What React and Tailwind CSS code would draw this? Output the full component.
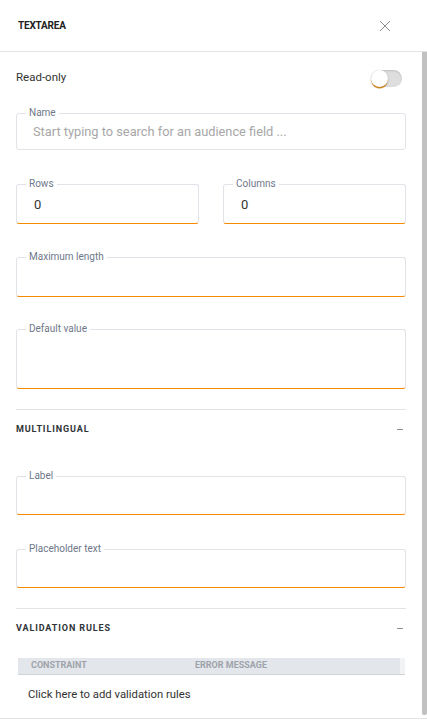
const font = { fontFamily: "Roboto, 'Liberation Sans', sans-serif" };

function Field({ label, height, orange = true, placeholder, value, className = "" }) {
  return (
    <fieldset
      className={`border border-[#e1e3e8] rounded-[3px] px-0 pb-0 m-0 min-w-0 ${
        orange ? "border-b-[#f68b00]" : ""
      } ${className}`}
    >
      <legend className="ml-[9px] px-[3px] text-[10px] leading-[12px] text-[#6e7889]">
        {label}
      </legend>
      <div className={`flex items-center px-4 ${height}`}>
        {placeholder && (
          <span className="text-[12.8px] text-[#a7a7a7] -mt-[4px]">{placeholder}</span>
        )}
        {value && <span className="text-[13px] text-[#333] pl-[1px] -mt-[4px]">{value}</span>}
      </div>
    </fieldset>
  );
}

function SectionHeader({ title }) {
  return (
    <div className="flex items-center justify-between h-[39px]">
      <span className="text-[9px] font-bold tracking-[0.1em] text-[#2f3338]">{title}</span>
      <span className="w-[6px] h-px bg-[#8a8f99] mr-[3px]"></span>
    </div>
  );
}

export default function App() {
  return (
    <div className="w-[427px] h-[720px] bg-white overflow-hidden flex flex-col" style={font}>
      <div className="h-[52px] shrink-0 border-b border-[#e3e3e3] flex items-center justify-between pl-[18px] pr-[36px]">
        <span className="text-[10px] font-bold text-[#222] tracking-[-0.02em]">TEXTAREA</span>
        <svg width="12" height="12" viewBox="0 0 12 12" className="mt-[1px]">
          <path d="M1 1 L11 11 M11 1 L1 11" stroke="#8c8c8c" strokeWidth="1" fill="none" />
        </svg>
      </div>

      <div className="h-[667px] shrink-0 flex border-b border-[#e3e3e3]">
        <div className="flex-1 overflow-hidden pl-4 pr-[15px]">
          <div className="h-[52px] flex items-center justify-between">
            <span className="text-[11.5px] text-[#333]">Read-only</span>
            <div className="relative w-[31px] h-[17px] rounded-full bg-[#dedede] shadow-[inset_0_1px_2px_rgba(0,0,0,0.15)] mr-[4px]">
              <div className="absolute left-0 top-0 w-[17px] h-[17px] rounded-full bg-white shadow-[0_1px_2px_rgba(0,0,0,0.3),0_2px_0_-0.5px_#f5a32a]"></div>
            </div>
          </div>

          <Field
            label="Name"
            height="h-[30px]"
            orange={false}
            placeholder="Start typing to search for an audience field ..."
            className="mt-[3px]"
          />

          <div className="grid grid-cols-2 gap-6 mt-[28px]">
            <Field label="Rows" height="h-[33px]" value="0" />
            <Field label="Columns" height="h-[33px]" value="0" />
          </div>

          <Field label="Maximum length" height="h-[33px]" className="mt-[27px]" />
          <Field label="Default value" height="h-[53px]" className="mt-[26px]" />

          <div className="h-px bg-[#e3e3e3] mt-[20px]"></div>
          <SectionHeader title="MULTILINGUAL" />

          <Field label="Label" height="h-[32px]" className="mt-[21px]" />
          <Field label="Placeholder text" height="h-[32px]" className="mt-[28px]" />

          <div className="h-px bg-[#e3e3e3] mt-[20px]"></div>
          <SectionHeader title="VALIDATION RULES" />

          <div className="mt-[10px] ml-[2px] mr-[1px]">
            <div className="flex h-[17px] border-b border-[#cfd2d7]">
              <div className="flex-1 bg-[#e3e6ea] flex items-center text-[9px] font-bold text-[#9ea3ab]">
                <span className="w-[177px] pl-[13px]">CONSTRAINT</span>
                <span>ERROR MESSAGE</span>
              </div>
              <div className="w-[5px] bg-[#f2f3f5]"></div>
            </div>
            <div className="h-[40px] flex items-center pl-[10px] text-[11.3px] text-[#333]">
              Click here to add validation rules
            </div>
          </div>
        </div>
        <div className="w-[6px] shrink-0">
          <div className="ml-px w-[5px] h-[663px] bg-[#c1c1c1] rounded-b-[2px]"></div>
        </div>
      </div>
    </div>
  );
}
